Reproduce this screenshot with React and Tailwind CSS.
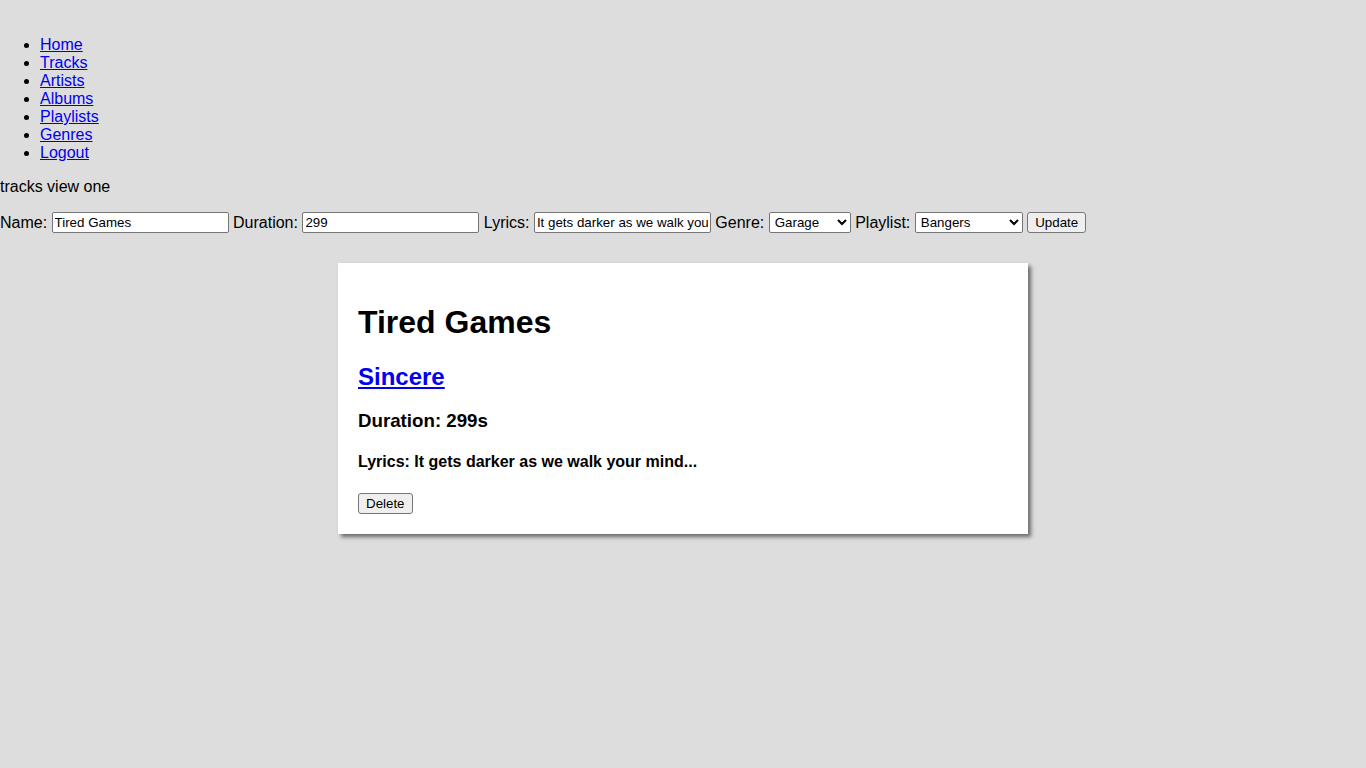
const NAV = ["Home", "Tracks", "Artists", "Albums", "Playlists", "Genres", "Logout"];

const field =
  "bg-white border border-[#767676] rounded-[2px] text-[13.33px] leading-[15px] px-[2px] py-[1px] h-[21px] text-black align-middle";

export default function App() {
  return (
    <div className="min-h-[768px] bg-[#dddddd] text-black font-['Liberation_Sans',Arial,sans-serif] text-[16px] leading-[18px]">
      <div className="pt-[36px]">
        <ul className="list-disc pl-[40px]">
          {NAV.map((n) => (
            <li key={n} className="h-[18px]">
              <a href="#" className="text-[#0000ee] underline">
                {n}
              </a>
            </li>
          ))}
        </ul>
      </div>
      <p className="mt-[16px] h-[18px]">tracks view one</p>

      <form className="mt-[16px] flex items-center h-[21px] whitespace-nowrap">
        <span>Name:&nbsp;</span>
        <input className={`${field} w-[177px]`} defaultValue="Tired Games" />
        <span>&nbsp;Duration:&nbsp;</span>
        <input className={`${field} w-[177px]`} defaultValue="299" />
        <span>&nbsp;Lyrics:&nbsp;</span>
        <input
          className={`${field} w-[177px]`}
          defaultValue="It gets darker as we walk your mind..."
        />
        <span>&nbsp;Genre:&nbsp;</span>
        <select className={`${field} w-[82px] h-[19px] py-0 pl-[1px]`} defaultValue="Garage">
          <option>Garage</option>
          <option>House</option>
        </select>
        <span>&nbsp;Playlist:&nbsp;</span>
        <select className={`${field} w-[108px] h-[19px] py-0 pl-[1px]`} defaultValue="Bangers">
          <option>Bangers</option>
          <option>Chill</option>
        </select>
        <span>&nbsp;</span>
        <button
          type="button"
          className="bg-[#efefef] border border-[#767676] rounded-[3px] text-[13.33px] leading-[15px] h-[21px] px-[7px] text-black"
        >
          Update
        </button>
      </form>

      <div className="mt-[30px] mx-auto w-[690px] bg-white p-[20px] shadow-[3px_3px_4px_#6a6a6a]">
        <h1 className="mt-[21.44px] text-[32px] leading-[37px] font-bold">Tired Games</h1>
        <h2 className="mt-[21.44px] text-[24px] leading-[27.6px] font-bold">
          <a href="#" className="text-[#0000ee] underline">
            Sincere
          </a>
        </h2>
        <h3 className="mt-[19.92px] text-[18.72px] leading-[21.5px] font-bold">Duration: 299s</h3>
        <h4 className="mt-[21.28px] text-[16px] leading-[18.4px] font-bold">
          Lyrics: It gets darker as we walk your mind...
        </h4>
        <button
          type="button"
          className="mt-[21.28px] block bg-[#efefef] border border-[#767676] rounded-[3px] text-[13.33px] leading-[15px] h-[21px] px-[7px] text-black"
        >
          Delete
        </button>
      </div>
    </div>
  );
}
